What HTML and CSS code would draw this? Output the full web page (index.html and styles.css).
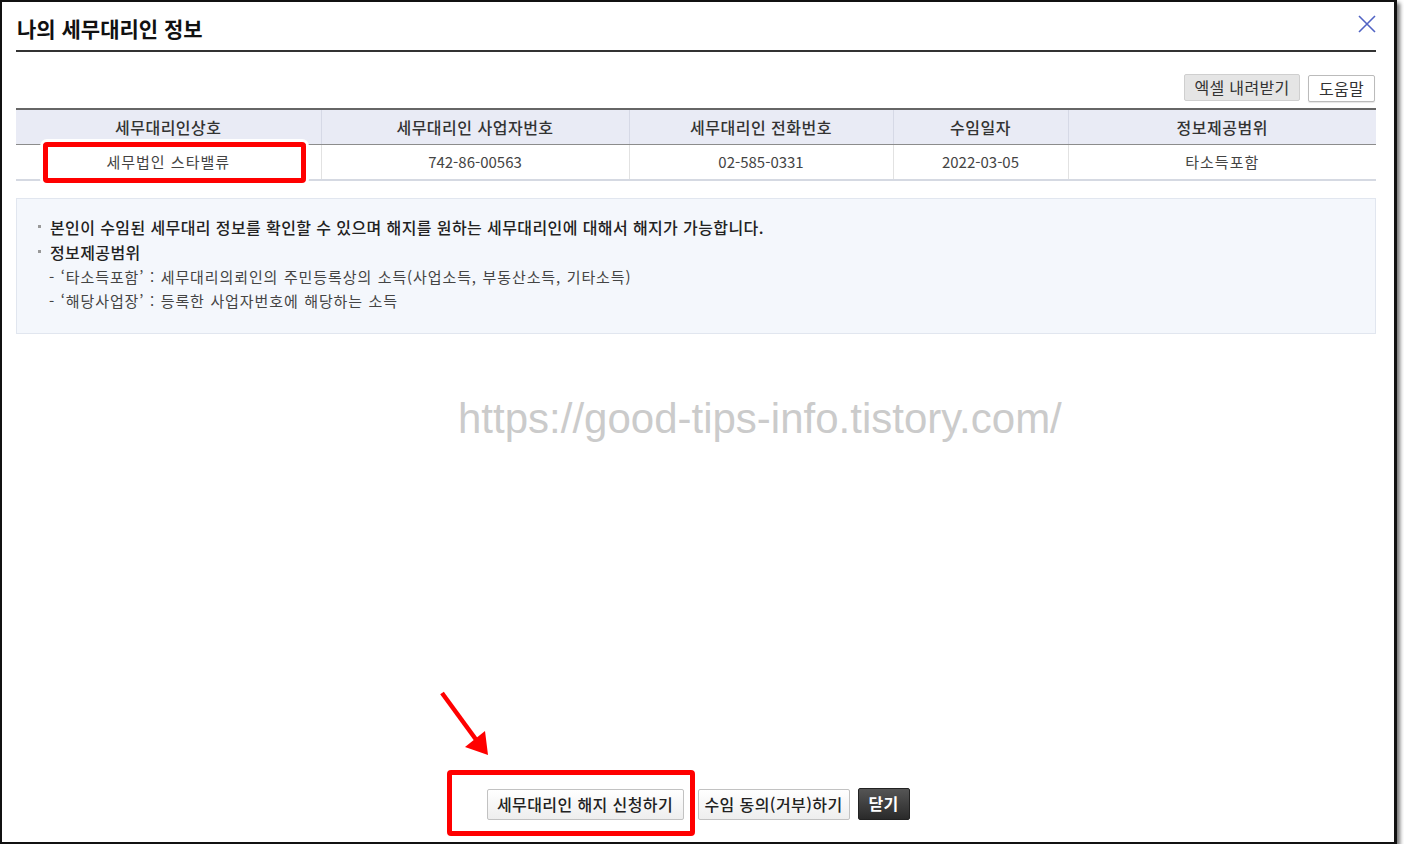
FILE: index.html
```html
<!DOCTYPE html>
<html lang="ko">
<head>
<meta charset="utf-8">
<title>나의 세무대리인 정보</title>
<link rel="stylesheet" href="styles.css">
</head>
<body>
<div class="frame">
  <div class="title-bar">
    <h1 class="title">나의 세무대리인 정보</h1>
    <svg class="close" width="18" height="18" viewBox="0 0 18 18"><path d="M1 1 L17 17 M17 1 L1 17" stroke="#5163c4" stroke-width="1.6" fill="none"/></svg>
  </div>
  <div class="toolbar">
    <span class="btn btn-grey">엑셀 내려받기</span>
    <span class="btn btn-white">도움말</span>
  </div>
  <table class="grid">
    <colgroup>
      <col class="c1"><col class="c2"><col class="c3"><col class="c4"><col class="c5">
    </colgroup>
    <thead>
      <tr><th>세무대리인상호</th><th>세무대리인 사업자번호</th><th>세무대리인 전화번호</th><th>수임일자</th><th>정보제공범위</th></tr>
    </thead>
    <tbody>
      <tr><td class="ko">세무법인 스타밸류</td><td>742-86-00563</td><td>02-585-0331</td><td>2022-03-05</td><td class="ko">타소득포함</td></tr>
    </tbody>
  </table>
  <div class="info">
    <p class="li"><span class="dot"></span>본인이 수임된 세무대리 정보를 확인할 수 있으며 해지를 원하는 세무대리인에 대해서 해지가 가능합니다.</p>
    <p class="li"><span class="dot"></span>정보제공범위</p>
    <p class="sub">- ‘타소득포함’ : 세무대리의뢰인의 주민등록상의 소득(사업소득, 부동산소득, 기타소득)</p>
    <p class="sub">- ‘해당사업장’ : 등록한 사업자번호에 해당하는 소득</p>
  </div>
  <div class="spacer"></div>
  <div class="actions">
    <span class="btn2 cancel">세무대리인 해지 신청하기</span>
    <span class="btn2 agree">수임 동의(거부)하기</span>
    <span class="btn2 dark">닫기</span>
  </div>

  <div class="watermark">https://good-tips-info.tistory.com/</div>
  <div class="mark mark-top"></div>
  <div class="mark mark-bottom"></div>
  <svg class="arrow" width="70" height="80" viewBox="0 0 70 80">
    <line x1="4" y1="4" x2="42" y2="56" stroke="#f00" stroke-width="4.5"/>
    <polygon points="50,66 27,58 47,42" fill="#f00"/>
  </svg>
</div>
</body>
</html>
```

FILE: styles.css
```css
* { box-sizing: border-box; }
html, body { margin: 0; padding: 0; background: #fff; }
body {
  font-family: "Noto Sans CJK KR", "Noto Sans", sans-serif;
  color: #333;
}
.frame {
  position: relative;
  width: 1397px;
  height: 844px;
  border: 2px solid #111;
  border-right-width: 3px;
  box-shadow: 3px 3px 4px rgba(0,0,0,0.55);
  padding: 0 18px 0 14px;
  display: flex;
  flex-direction: column;
  background: #fff;
}
.title-bar {
  display: flex;
  justify-content: space-between;
  align-items: flex-start;
  padding-top: 12px;
  padding-bottom: 8px;
  border-bottom: 2px solid #333;
}
.title {
  margin: 0 0 0 1px;
  font-size: 21px;
  line-height: 28px;
  font-weight: 700;
  color: #111;
}
.close { margin-top: 1px; }
.toolbar {
  display: flex;
  justify-content: flex-end;
  gap: 8px;
  margin-top: 22px;
  margin-bottom: 6px;
  padding-right: 1px;
}
.btn {
  height: 27px;
  font-size: 16px;
  line-height: 25px;
  padding: 0;
  border: 1px solid #cfcfcf;
  border-radius: 2px;
  color: #333;
  letter-spacing: 0.3px;
}
.btn-grey { background: #e5e5e5; width: 116px; text-align: center; }
.btn-white { background: #fff; width: 67px; text-align: center; border-color: #bbb; box-shadow: 0 1px 1px rgba(0,0,0,0.1); margin-top: 1px; }
.grid {
  width: 1360px;
  border-collapse: collapse;
  table-layout: fixed;
  border-top: 2px solid #666;
}
.c1 { width: 305px; } .c2 { width: 308px; } .c3 { width: 264px; } .c4 { width: 175px; } .c5 { width: 308px; }
.grid th {
  background: #e9ebf5;
  height: 35px;
  font-size: 16px;
  font-weight: 500;
  color: #333;
  letter-spacing: 0.5px;
  border-bottom: 1px solid #8c8c8c;
  border-left: 1px solid #d6d9e6;
  padding: 0;
}
.grid td {
  height: 36px;
  font-size: 15px;
  color: #444;
  text-align: center;
  border-bottom: 2px solid #d5d9e2;
  border-left: 1px solid #e2e2e2;
  padding: 0;
}
.grid td.ko { letter-spacing: 1px; }
.grid th:first-child, .grid td:first-child { border-left: none; }
.info {
  margin-top: 17px;
  width: 1360px;
  height: 136px;
  background: #f4f7fc;
  border: 1px solid #e1e6ef;
  padding: 16px 0 0 21px;
}
.info p { margin: 0; }
.li {
  font-size: 16px;
  line-height: 25px;
  font-weight: 500;
  color: #222;
  letter-spacing: 0.4px;
  display: flex;
  align-items: center;
}
.dot {
  display: inline-block;
  width: 3px;
  height: 3px;
  background: #999;
  margin-right: 9px;
  margin-top: -2px;
}
.sub {
  font-size: 15px;
  line-height: 24px;
  color: #444;
  letter-spacing: 0.9px;
  word-spacing: 0.5px;
  padding-left: 11px;
}
.spacer { flex: 1; }
.actions {
  display: flex;
  justify-content: center;
  align-items: center;
  padding-bottom: 22px;
  padding-left: 4px;
}
.btn2 {
  height: 31px;
  font-size: 16px;
  line-height: 29px;
  font-weight: 500;
  text-align: center;
  letter-spacing: 0.4px;
  border: 1px solid #c2c2c2;
  border-radius: 2px;
  background: linear-gradient(#ffffff, #eeeeee);
  color: #222;
}
.cancel { width: 197px; margin-right: 14px; }
.agree { width: 152px; margin-right: 8px; }
.dark {
  width: 52px;
  height: 32px;
  background: linear-gradient(#555, #2a2a2a);
  border-color: #222;
  color: #fff;
  font-weight: 700;
}
.watermark {
  position: absolute;
  left: 456px;
  top: 396px;
  font-family: "Liberation Sans", Arial, sans-serif;
  font-size: 42px;
  line-height: 42px;
  color: #cbcbcb;
  white-space: nowrap;
}
.mark {
  position: absolute;
  border: 5px solid #f00;
  border-radius: 4px;
}
.mark-top {
  left: 41px; top: 140px; width: 263px; height: 41px;
  box-shadow: 0 0 0 3px #fff;
}
.mark-bottom {
  left: 445px; top: 768px; width: 248px; height: 66px;
}
.arrow {
  position: absolute;
  left: 436px;
  top: 687px;
}
```
